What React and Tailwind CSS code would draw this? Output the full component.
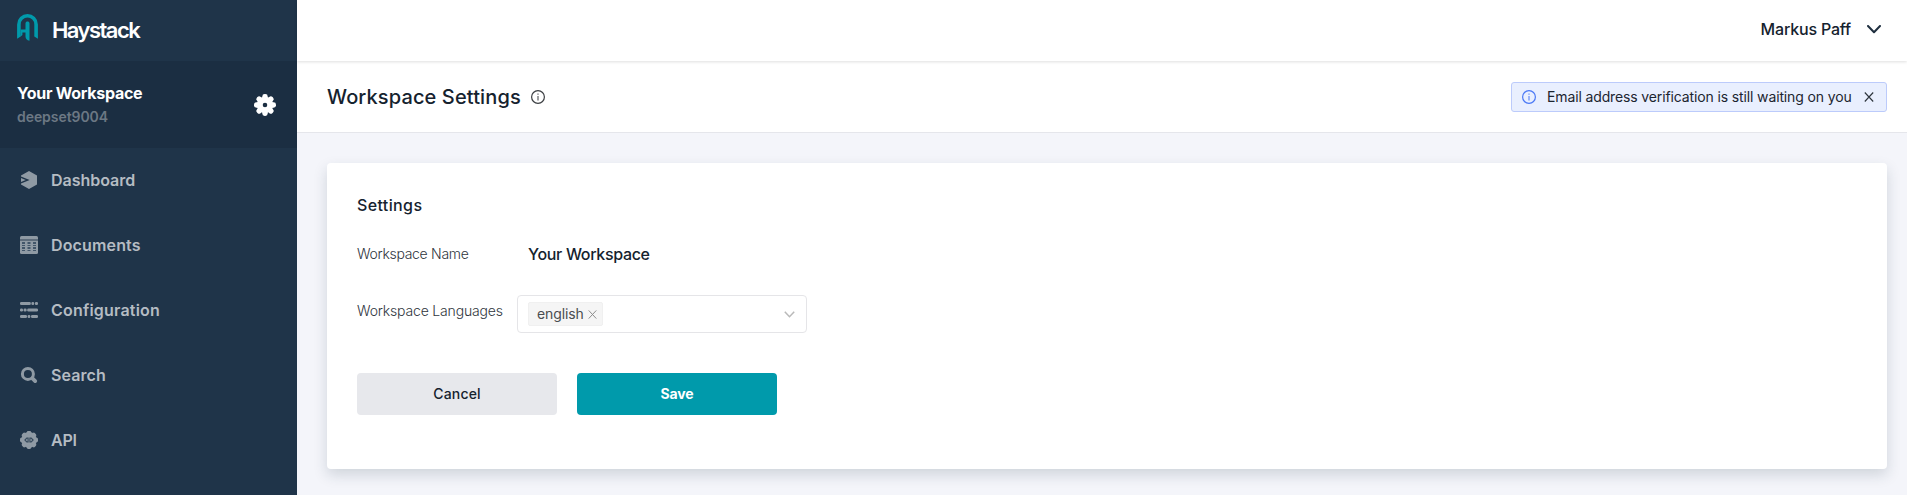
function LogoMark() {
  return (
    <svg className="-mt-[5px] h-7 w-[21px] shrink-0" viewBox="0 0 21 28" fill="none">
      <path d="M1.9 22V10.4a8.6 8.6 0 0 1 17.2 0V22" stroke="#009aab" strokeWidth="3.6" />
      <path d="M.1 21.8v3l3.6-2.4v-.6zM20.9 21.8v3l-3.6-2.4v-.6z" fill="#009aab" />
      <path d="M8.5 9.4c0-2.4 4-2.4 4 0v17.4c-2.6-.4-4-1.8-4-4.2v-4H3.6v-3.2h4.9z" fill="#009aab" />
      <path d="M3.6 18v4.6l1.8-1.6V18z" fill="#009aab" />
    </svg>
  );
}

function GearIcon() {
  return (
    <svg className="h-[22px] w-[22px]" viewBox="-11 -11 22 22" fill="#ffffff">
      <path
        fillRule="evenodd"
        d="M0-8.2A8.2 8.2 0 1 1 0 8.2 8.2 8.2 0 1 1 0-8.2ZM0-2.3A2.3 2.3 0 1 0 0 2.3 2.3 2.3 0 1 0 0-2.3Z"
      />
      {[0, 45, 90, 135, 180, 225, 270, 315].map((angle) => (
        <rect key={angle} x="-2.7" y="-11" width="5.4" height="6" rx="2.4" transform={`rotate(${angle})`} />
      ))}
    </svg>
  );
}

function DashboardIcon() {
  return (
    <svg className="h-[18px] w-[18px]" viewBox="0 0 18 18">
      <path d="M9 0 17 4.4v9.2L9 18 1 13.6v-1L9.6 9 1 5.4v-1z" fill="#8f9aa4" />
      <path d="M1 7.1 5.8 9 1 10.9z" fill="#8f9aa4" />
    </svg>
  );
}

function DocumentsIcon() {
  return (
    <svg className="h-[18px] w-[18px]" viewBox="0 0 18 18">
      <rect width="18" height="18" rx="1.5" fill="#8f9aa4" />
      <path d="M0 3h18v2H0z" fill="#5d6c7b" />
      <path
        d="M2 6h3v2H2zM7.5 6h3v2h-3zM13 6h3v2h-3zM2 9h3v1H2zM7.5 9h3v1h-3zM13 9h3v1h-3zM2 11h3v2H2zM7.5 11h3v2h-3zM13 11h3v2h-3zM2 14h3v1H2zM7.5 14h3v1h-3zM13 14h3v1h-3z"
        fill="#42566a"
      />
    </svg>
  );
}

function ConfigurationIcon() {
  return (
    <svg className="h-[18px] w-[18px]" viewBox="0 0 18 18" fill="#8f9aa4">
      <rect x="0" y="1" width="10.8" height="3" rx="1.2" />
      <rect x="11.4" y="1" width="2.8" height="3" rx="1.2" />
      <rect x="14.9" y="1" width="3.1" height="3" rx="1.2" />
      <rect x="0" y="7.5" width="3" height="3" rx="1.2" />
      <rect x="3.6" y="7.5" width="3" height="3" rx="1.2" />
      <rect x="7.2" y="7.5" width="10.8" height="3" rx="1.2" />
      <rect x="0" y="14" width="7" height="3" rx="1.2" />
      <rect x="7.6" y="14" width="2.8" height="3" rx="1.2" />
      <rect x="11" y="14" width="7" height="3" rx="1.2" />
    </svg>
  );
}

function SearchIcon() {
  return (
    <svg className="h-[18px] w-[18px]" viewBox="0 0 18 18" fill="none" stroke="#8f9aa4">
      <circle cx="7.9" cy="7.9" r="5.5" strokeWidth="3" />
      <path d="m12.4 12.3 2.8 2.8" strokeWidth="3.8" strokeLinecap="round" />
    </svg>
  );
}

function ApiIcon() {
  return (
    <svg className="h-[18px] w-[18px]" viewBox="-9 -9 18 18" fill="#8f9aa4">
      <circle r="7.9" />
      {[0, 45, 90, 135, 180, 225, 270, 315].map((angle) => (
        <rect key={angle} x="-2.2" y="-9" width="4.4" height="4" rx="1.4" transform={`rotate(${angle})`} />
      ))}
      <g fill="none" stroke="#34485b" strokeWidth="1.1">
        <path d="M-.9-1.9v3.8h-1.3L-4.1 0l1.9-1.9zM.9-1.9v3.8h1.3L4.1 0 2.2-1.9z" />
      </g>
    </svg>
  );
}

function InfoIcon({ className }) {
  return (
    <svg className={className} viewBox="0 0 14 14" fill="none">
      <circle cx="7" cy="7" r="6.4" stroke="currentColor" strokeWidth="1.2" />
      <path d="M6.5 3.6h1v1.2h-1zM6.5 5.9h1v4.6h-1z" fill="currentColor" />
    </svg>
  );
}

function CloseIcon({ className }) {
  return (
    <svg className={className} viewBox="0 0 10 10" fill="none" stroke="currentColor">
      <path d="m.8.5 8.4 9M9.2.5.8 9.5" strokeWidth="1.1" />
    </svg>
  );
}

const NAV = [
  { label: "Dashboard", Icon: DashboardIcon, tracking: "tracking-[-0.02px]" },
  { label: "Documents", Icon: DocumentsIcon, tracking: "tracking-[0.15px]" },
  { label: "Configuration", Icon: ConfigurationIcon, tracking: "tracking-[0.2px]" },
  { label: "Search", Icon: SearchIcon, tracking: "tracking-[0.1px]" },
  { label: "API", Icon: ApiIcon, tracking: "tracking-[-0.25px]" },
];

function Sidebar() {
  return (
    <aside className="flex w-[297px] shrink-0 flex-col bg-[#1f3449]">
      <div className="flex h-[61px] items-center pl-[17px]">
        <LogoMark />
        <span className="ml-3.5 pb-0.5 text-[22px] leading-none font-semibold tracking-[-1.55px] text-white">
          Haystack
        </span>
      </div>
      <div className="flex h-[87px] items-center justify-between bg-[#1b2e42] pr-[21px] pl-[17px]">
        <div className="flex flex-col">
          <span className="text-base leading-6 font-bold tracking-[-0.27px] text-white">Your Workspace</span>
          <span className="text-sm leading-6 font-semibold tracking-[-0.06px] text-[#6c7884]">deepset9004</span>
        </div>
        <GearIcon />
      </div>
      <nav className="flex flex-col">
        {NAV.map(({ label, Icon, tracking }) => (
          <a key={label} className="flex h-[65px] items-center gap-[13px] pb-px pl-5">
            <Icon />
            <span className={`text-base font-semibold text-[#b5bcc3] ${tracking}`}>{label}</span>
          </a>
        ))}
      </nav>
    </aside>
  );
}

export default function App() {
  return (
    <div className="flex h-[495px] overflow-hidden bg-[#f4f5fa] font-['Inter',sans-serif] text-[#15222e]">
      <Sidebar />
      <div className="flex min-w-0 flex-1 flex-col">
        <header className="z-10 flex h-[61px] shrink-0 items-center justify-end bg-white pr-[26px] pb-[3px] shadow-[0_1px_3px_rgba(0,0,0,0.13)]">
          <span className="text-base font-medium tracking-[-0.18px]">Markus Paff</span>
          <svg className="ml-4 h-[9px] w-[14px]" viewBox="0 0 14 9" fill="none">
            <path d="m1 1 6 6.2L13 1" stroke="#1f2f3f" strokeWidth="2" strokeLinecap="round" strokeLinejoin="round" />
          </svg>
        </header>

        <div className="flex h-[72px] shrink-0 items-center justify-between border-b border-[#e5e6eb] bg-white pr-5 pl-[30px]">
          <div className="flex items-center">
            <h1 className="text-xl font-medium tracking-[0.12px]">Workspace Settings</h1>
            <InfoIcon className="ml-2.5 h-3.5 w-3.5 text-[#3c3f43]" />
          </div>
          <div className="flex h-[30px] w-[376px] items-center rounded-[3px] border border-[#bccbfb] bg-[#e9effe] pl-2.5">
            <InfoIcon className="h-3.5 w-3.5 text-[#4a78f5]" />
            <span className="ml-[11px] w-[307px] text-sm whitespace-nowrap tracking-[-0.13px] text-[#1c2530]">
              Email address verification is still waiting on you
            </span>
            <CloseIcon className="ml-2.5 h-2.5 w-2.5 text-[#2d343c]" />
          </div>
        </div>

        <main className="pt-[30px] pr-5 pl-[30px]">
          <section className="h-[306px] rounded-[4px] bg-white px-[30px] pt-[30px] shadow-[0_6px_14px_rgba(31,52,73,0.17)]">
            <h2 className="text-base leading-6 font-[450] tracking-[0.38px]">Settings</h2>

            <div className="mt-[25px] flex h-6 items-center">
              <span className="w-[171px] text-sm font-light tracking-[-0.3px] text-[#30363d]">Workspace Name</span>
              <span className="text-base font-[450] tracking-[-0.32px]">Your Workspace</span>
            </div>

            <div className="mt-[29px] flex">
              <span className="mt-1 w-40 text-sm leading-6 font-light tracking-[-0.17px] text-[#30363d]">
                Workspace Languages
              </span>
              <div className="flex h-[38px] w-[290px] items-center justify-between rounded-[4px] border border-[#e5e5e8] pr-[11px] pl-2.5">
                <span className="flex h-6 w-[75px] items-center rounded-[2px] border border-[#f0f0f0] bg-[#f5f5f5] pl-2 text-sm text-[#4a4d50]">
                  <span className="w-[51px] pb-px tracking-[-0.1px]">english</span>
                  <CloseIcon className="h-[9px] w-[9px] text-[#8c8c8c]" />
                </span>
                <svg className="h-[7px] w-[11px]" viewBox="0 0 11 7" fill="none">
                  <path d="m.8.7 4.7 5 4.7-5" stroke="#b9b9b9" strokeWidth="1.5" />
                </svg>
              </div>
            </div>

            <div className="mt-10 flex gap-5">
              <button className="h-[42px] w-[200px] rounded-[4px] bg-[#e7e8ec] text-sm font-medium tracking-[0.15px]">
                Cancel
              </button>
              <button className="h-[42px] w-[200px] rounded-[4px] bg-[#009aab] text-sm font-bold tracking-[-0.1px] text-white">
                Save
              </button>
            </div>
          </section>
        </main>
      </div>
    </div>
  );
}
